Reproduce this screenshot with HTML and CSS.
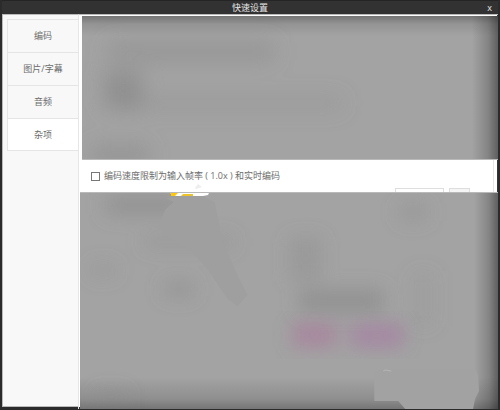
FILE: index.html
```html
<!DOCTYPE html>
<html lang="zh-CN">
<head>
<meta charset="utf-8">
<title>快速设置</title>
<link rel="stylesheet" href="styles.css">
</head>
<body>
<div class="window">
  <header class="titlebar">
    <h1 class="title">快速设置</h1>
    <button class="close" type="button" aria-label="x">x</button>
  </header>
  <div class="workspace">
    <nav class="sidebar">
      <button class="tab" type="button">编码</button>
      <button class="tab" type="button">图片/字幕</button>
      <button class="tab" type="button">音频</button>
      <button class="tab active" type="button">杂项</button>
    </nav>
    <main class="content">
      <section class="veil upper">
        <svg class="art" viewBox="0 0 416 143" preserveAspectRatio="none" aria-hidden="true">
          <defs>
            <filter id="softA" x="-20%" y="-50%" width="140%" height="200%"><feGaussianBlur stdDeviation="10"/></filter>
          </defs>
          <g fill="#858585">
            <g filter="url(#softA)">
              <rect x="26" y="26" width="166" height="19" opacity=".42"/>
              <rect x="22" y="54" width="38" height="38" opacity=".6"/>
              <rect x="30" y="80" width="230" height="14" opacity=".28"/>
              <rect x="10" y="130" width="56" height="18" opacity=".5"/>
            </g>
          </g>
        </svg>
      </section>
      <section class="option-row">
        <label class="option"><input class="check" type="checkbox"><span>编码速度限制为输入帧率 ( 1.0x ) 和实时编码</span></label>
        <span class="stub wide"></span>
        <span class="stub"></span>
      </section>
      <section class="veil lower">
        <svg class="art" viewBox="0 0 419 216" preserveAspectRatio="none" aria-hidden="true">
          <defs>
            <filter id="softB" x="-20%" y="-50%" width="140%" height="200%"><feGaussianBlur stdDeviation="9"/></filter>
          </defs>
          <g filter="url(#softB)" fill="#858585">
            <rect x="26" y="2" width="78" height="20" opacity=".5"/>
            <rect x="64" y="42" width="90" height="14" opacity=".25"/>
            <rect x="10" y="70" width="26" height="14" opacity=".25"/>
            <rect x="84" y="88" width="30" height="16" opacity=".35"/>
            <rect x="210" y="44" width="32" height="44" opacity=".3"/>
            <rect x="220" y="96" width="84" height="24" opacity=".55"/>
            <rect x="320" y="10" width="28" height="18" opacity=".3"/>
            <rect x="332" y="78" width="24" height="56" opacity=".12"/>
            <rect x="14" y="198" width="34" height="12" opacity=".3"/>
          </g>
          <g filter="url(#softB)">
            <rect x="213" y="130" width="44" height="24" fill="#aa7e9c" opacity=".75"/>
            <rect x="272" y="131" width="52" height="23" fill="#a57fa2" opacity=".8"/>
          </g>
          <path d="M86 5L121 2L135 9L143 48L160 87L168 102L158 113L148 106L127 75L110 57L90 45L78 34L86 16L94 9Z" fill="#9f9f9f"/>
        </svg>
        <svg class="art" viewBox="0 0 419 216" preserveAspectRatio="none" aria-hidden="true">
          <path d="M295 178L312 176L396 176L399 182L400 198L396 206L394 216L326 216L319 208L295 208Z" fill="#a2a2a2"/>
          <path d="M304 178L306 177L312 178" fill="none" stroke="#b5b5b5"/>
        </svg>
      </section>
      <svg class="scrap" viewBox="0 0 60 22" aria-hidden="true">
        <path d="M10 13H49L48 15L43 16H14Z" fill="#fff"/>
        <path d="M11 13H18L15 16H11Z" fill="#ffc80a"/>
        <path d="M23 14H33V16H21Z" fill="#ecc32b"/>
        <path d="M5 1L31 0L30 2L7 3Z" fill="#fff"/>
        <path d="M35 8L38 4L42 7L36 9Z" fill="#eee"/>
      </svg>
    </main>
  </div>
</div>
</body>
</html>
```
FILE: styles.css
```css
* {
  box-sizing: border-box;
}

body {
  margin: 0;
  font: 9px/14px "Open Sans", "Noto Sans CJK SC", sans-serif;
  color: #6c6c6c;
}

button {
  margin: 0;
  padding: 0;
  border: 0;
  background: none;
  font: inherit;
  color: inherit;
}

.window {
  display: flex;
  flex-direction: column;
  min-height: 100vh;
  padding: 0 2px 1px;
  background: #2b2b2b;
}

.titlebar {
  display: grid;
  grid-template-columns: 1fr auto 1fr;
  height: 14px;
  border-top: 1px solid #242424;
  background: #323232;
  color: #e6e6e6;
}

.title {
  grid-column: 2;
  margin: 0;
  font: inherit;
}

.close {
  justify-self: end;
  padding: 0 6px;
}

.workspace {
  display: flex;
  flex: 1;
}

.sidebar {
  flex: 0 0 76px;
  margin-bottom: 2px;
  padding: 4px 0 0 4px;
  border: 1px solid #bababa;
  border-right: 0;
  background: #f8f8f8;
}

.tab {
  display: block;
  width: 100%;
  height: 33px;
  border: 1px solid #e5e5e5;
  border-width: 1px 0 0 1px;
}

.tab.active {
  border-bottom-width: 1px;
  background: #fff;
}

.content {
  position: relative;
  display: flex;
  flex: 1;
  flex-direction: column;
  padding-left: 2px;
  border-left: 1px solid #e6e6e6;
  border-top: 1px solid #bababa;
  background: linear-gradient(#fff, #fff) 0 0 / calc(100% - 1px) calc(100% - 2px) no-repeat #353535;
}

.veil {
  position: relative;
  overflow: hidden;
}

.upper {
  flex: 0 0 144px;
  margin: 1px 0 0 1px;
  border-bottom: 1px solid #b9b9b9;
  background:
    linear-gradient(#00000048, #00000018 8px, transparent 20px),
    linear-gradient(to left, #0000006b, #00000030 10px, transparent 26px),
    #a3a3a3;
}

.lower {
  flex: 1;
  margin-left: -1px;
  border-top: 1px solid #b9b9b9;
  background:
    linear-gradient(to top, #00000048, #00000020 10px, transparent 32px),
    linear-gradient(to left, #0000006b, #00000030 9px, transparent 24px),
    #a3a3a3;
}

.art {
  position: absolute;
  inset: 0;
  display: block;
  width: 100%;
  height: 100%;
}

.option-row {
  display: flex;
  align-items: flex-end;
  flex: 0 0 32px;
  gap: 5px;
  margin-right: 4px;
  padding-right: 23px;
  border-right: 1px solid #e6e6e6;
}

.option {
  display: flex;
  align-items: center;
  align-self: center;
  gap: 4px;
  margin-right: auto;
  padding-left: 10px;
  white-space: nowrap;
}

.check {
  appearance: none;
  width: 9px;
  height: 9px;
  margin: 0;
  border: 1px solid #777;
  background: #fff;
}

.check:checked {
  background: #777;
}

.stub {
  width: 21px;
  height: 4px;
  border: 1px solid #dedede;
  border-bottom: 0;
  background: #f5f5f5;
}

.stub.wide {
  width: 49px;
  background: #fff;
}

.scrap {
  position: absolute;
  top: 165px;
  left: 81px;
  z-index: 1;
  width: 60px;
  height: 22px;
}
```
